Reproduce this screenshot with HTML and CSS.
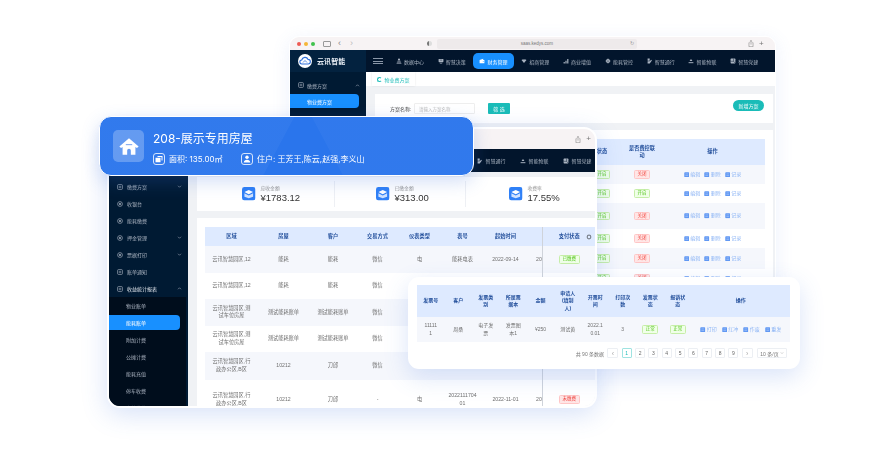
FILE: index.html
```html
<!DOCTYPE html>
<html lang="zh-CN">
<head>
<meta charset="utf-8">
<title>云讯智能</title>
<link rel="stylesheet" href="styles.css">
</head>
<body>
<svg class="defs" aria-hidden="true">
  <symbol id="i-square" viewBox="0 0 10 10"><rect x="1" y="1" width="8" height="8" rx="1.500" fill="none" stroke="currentColor" stroke-width="1.100"/><path d="M3 4h4M3 6h4" stroke="currentColor" stroke-width=".9"/></symbol>
  <symbol id="i-circle" viewBox="0 0 10 10"><circle cx="5" cy="5" r="4" fill="none" stroke="currentColor" stroke-width="1.100"/><circle cx="5" cy="5" r="1.600" fill="currentColor"/></symbol>
  <symbol id="n1" viewBox="0 0 10 10"><circle cx="5" cy="2.500" r="1.800" fill="currentColor"/><path d="M2.500 5.200h5M1.500 7h7M1 9h8" stroke="currentColor" stroke-width="1.100"/></symbol>
  <symbol id="n2" viewBox="0 0 10 10"><rect x="1" y="1.500" width="8" height="5.500" rx="1" fill="currentColor"/><path d="M3 3.500h4" stroke="#02152c" stroke-width=".8"/><path d="M3 8.800h4" stroke="currentColor" stroke-width="1.100"/></symbol>
  <symbol id="n3" viewBox="0 0 10 10"><path d="M1 3.500L7 1.200v2.300h2v5.300H1z" fill="currentColor"/><circle cx="7" cy="6" r=".8" fill="#1890ff"/></symbol>
  <symbol id="n4" viewBox="0 0 10 10"><path d="M.8 3.500L3.500 2 5 3l1.500-1 2.700 1.500L5 8.300z" fill="currentColor"/></symbol>
  <symbol id="n5" viewBox="0 0 10 10"><path d="M1 9V6.500h2V9zM4 9V4.500h2V9zM7 9V1.500h2V9z" fill="currentColor"/></symbol>
  <symbol id="n6" viewBox="0 0 10 10"><circle cx="5" cy="5" r="3.400" fill="currentColor"/><path d="M5 .6v8.800M.6 5h8.800" stroke="currentColor" stroke-width=".9"/><circle cx="5" cy="5" r="1" fill="#02152c"/></symbol>
  <symbol id="n7" viewBox="0 0 10 10"><path d="M1 1h3.500v3.500H1zM1 9V5.500h3.500L7 3l1.200 1.200L4.500 9z" fill="currentColor"/></symbol>
  <symbol id="n8" viewBox="0 0 10 10"><path d="M5 1.500l2.400 3.700H2.600z" fill="currentColor"/><path d="M1 7.800h8" stroke="currentColor" stroke-width="1.600"/></symbol>
  <symbol id="n9" viewBox="0 0 10 10"><rect x="1" y="1" width="8" height="8" rx="1" fill="currentColor"/><path d="M1 5.500h5V1M6 5.500L9 9" stroke="#02152c" stroke-width=".8" fill="none"/></symbol>
  <symbol id="i-down" viewBox="0 0 10 10"><path d="M2 3.500l3 3 3-3" fill="none" stroke="currentColor" stroke-width="1.400"/></symbol>
  <symbol id="i-up" viewBox="0 0 10 10"><path d="M2 6.500l3-3 3 3" fill="none" stroke="currentColor" stroke-width="1.400"/></symbol>
  <symbol id="i-op" viewBox="0 0 10 10"><rect x=".5" y=".5" width="9" height="9" rx="1.500" fill="currentColor"/><path d="M2.500 3.500h5M2.500 6.500h5" stroke="#fff" stroke-width=".8" opacity=".7"/></symbol>
  <symbol id="i-share" viewBox="0 0 10 12"><path d="M2.500 4.500H1.500v7h7v-7H7.500M5 8V.8M3 2.700L5 .8l2 1.900" fill="none" stroke="currentColor" stroke-width=".9"/></symbol>
  <symbol id="i-box" viewBox="0 0 14 14"><rect width="14" height="14" rx="2.500" fill="#2f80f7"/><path d="M2.500 5.300L7 3l4.500 2.300L7 7.600z" fill="#fff"/><path d="M2.500 6.600L7 8.900l4.500-2.300v3.600L7 11.600l-4.500-1.400z" fill="#cfe2ff"/></symbol>
</svg>

<section class="win win-a">
  <div class="chrome">
    <span class="dot dot-r"></span><span class="dot dot-y"></span><span class="dot dot-g"></span>
    <span class="tb-side"></span>
    <span class="tb-arrow">‹</span><span class="tb-arrow tb-dim">›</span>
    <span class="tb-shield"></span>
    <div class="urlbar"><span class="url">saas.kedys.com</span><span class="reload">↻</span></div>
    <svg class="share"><use href="#i-share"/></svg>
    <span class="tb-plus">+</span>
  </div>
  <div class="navbar">
    <div class="brand">
      <svg class="logo" viewBox="0 0 14 14"><circle cx="7" cy="7" r="7" fill="#fff"/><path d="M4 10a2 2 0 0 1-.3-4 3.400 3.400 0 0 1 6.400-.6A2.300 2.300 0 0 1 10 10z" fill="none" stroke="#2f6fd8" stroke-width="1.100"/><path d="M5 8.500l2-2 2 2" fill="none" stroke="#2f6fd8" stroke-width=".8"/></svg>
      <span class="brand-name">云讯智能</span>
    </div>
    <div class="burger"><i></i><i></i><i></i></div>
    <nav class="topnav">
      <a class="nav-item"><svg class="ico"><use href="#n1"/></svg>数据中心</a>
      <a class="nav-item"><svg class="ico"><use href="#n2"/></svg>智慧决策</a>
      <a class="nav-item nav-on"><svg class="ico"><use href="#n3"/></svg>财务管理</a>
      <a class="nav-item"><svg class="ico"><use href="#n4"/></svg>招商管理</a>
      <a class="nav-item"><svg class="ico"><use href="#n5"/></svg>商业增值</a>
      <a class="nav-item"><svg class="ico"><use href="#n6"/></svg>能耗管控</a>
      <a class="nav-item"><svg class="ico"><use href="#n7"/></svg>智慧通行</a>
      <a class="nav-item"><svg class="ico"><use href="#n8"/></svg>智能物联</a>
      <a class="nav-item"><svg class="ico"><use href="#n9"/></svg>智慧党建</a>
    </nav>
  </div>
  <div class="body">
    <aside class="side side-a">
      <div class="side-row"><svg class="ico"><use href="#i-square"/></svg><span>缴费方案</span><svg class="chev"><use href="#i-up"/></svg></div>
      <div class="side-row side-on side-on-a"><span>物业费方案</span></div>
    </aside>
    <main class="main-a">
      <div class="tabbar"><div class="tab"><span class="tab-spin"></span>物业费方案</div></div>
      <div class="panel filter">
        <label class="f-label">方案名称:</label>
        <span class="f-input">请输入方案名称</span>
        <span class="btn-teal">筛 选</span>
        <span class="btn-pill">新增方案</span>
      </div>
      <div class="panel table-a-wrap">
        <table class="tbl tbl-a">
          <thead><tr class="ah"><th class="a0"></th><th class="a1">状态</th><th class="a2">是否费控联<br>动</th><th class="a3">操作</th></tr></thead>
          <tbody>
            <tr class="ar19 alt"><td></td><td><span class="tag tag-g">开启</span></td><td><span class="tag tag-r">关闭</span></td><td><span class="ops"><span><svg class="op"><use href="#i-op"/></svg>编辑</span><span><svg class="op"><use href="#i-op"/></svg>删除</span><span><svg class="op"><use href="#i-op"/></svg>记录</span></span></td></tr>
            <tr class="ar19"><td></td><td><span class="tag tag-g">开启</span></td><td><span class="tag tag-g">开启</span></td><td><span class="ops"><span><svg class="op"><use href="#i-op"/></svg>编辑</span><span><svg class="op"><use href="#i-op"/></svg>删除</span><span><svg class="op"><use href="#i-op"/></svg>记录</span></span></td></tr>
            <tr class="ar26 alt"><td></td><td><span class="tag tag-g">开启</span></td><td><span class="tag tag-r">关闭</span></td><td><span class="ops"><span><svg class="op"><use href="#i-op"/></svg>编辑</span><span><svg class="op"><use href="#i-op"/></svg>删除</span><span><svg class="op"><use href="#i-op"/></svg>记录</span></span></td></tr>
            <tr class="ar19"><td></td><td><span class="tag tag-g">开启</span></td><td><span class="tag tag-r">关闭</span></td><td><span class="ops"><span><svg class="op"><use href="#i-op"/></svg>编辑</span><span><svg class="op"><use href="#i-op"/></svg>删除</span><span><svg class="op"><use href="#i-op"/></svg>记录</span></span></td></tr>
            <tr class="ar21 alt"><td></td><td><span class="tag tag-g">开启</span></td><td><span class="tag tag-r">关闭</span></td><td><span class="ops"><span><svg class="op"><use href="#i-op"/></svg>编辑</span><span><svg class="op"><use href="#i-op"/></svg>删除</span><span><svg class="op"><use href="#i-op"/></svg>记录</span></span></td></tr>
            <tr class="ar19"><td></td><td><span class="tag tag-g">开启</span></td><td><span class="tag tag-r">关闭</span></td><td><span class="ops"><span><svg class="op"><use href="#i-op"/></svg>编辑</span><span><svg class="op"><use href="#i-op"/></svg>删除</span><span><svg class="op"><use href="#i-op"/></svg>记录</span></span></td></tr>
          </tbody>
        </table>
      </div>
    </main>
  </div>
</section>

<section class="win win-b">
  <div class="chrome chrome-b"><svg class="share"><use href="#i-share"/></svg><span class="tb-plus">+</span></div>
  <div class="navbar navbar-b">
    <nav class="topnav topnav-b">
      <a class="nav-item"><svg class="ico"><use href="#n7"/></svg>智慧通行</a>
      <a class="nav-item"><svg class="ico"><use href="#n8"/></svg>智能物联</a>
      <a class="nav-item"><svg class="ico"><use href="#n9"/></svg>智慧党建</a>
    </nav>
  </div>
  <div class="body body-b">
    <aside class="side side-b">
      <div class="side-row"><svg class="ico"><use href="#i-square"/></svg><span>缴费方案</span><svg class="chev"><use href="#i-down"/></svg></div>
      <div class="side-row"><svg class="ico"><use href="#i-circle"/></svg><span>收银台</span></div>
      <div class="side-row"><svg class="ico"><use href="#i-circle"/></svg><span>能耗缴费</span></div>
      <div class="side-row"><svg class="ico"><use href="#i-circle"/></svg><span>押金管理</span><svg class="chev"><use href="#i-down"/></svg></div>
      <div class="side-row"><svg class="ico"><use href="#i-circle"/></svg><span>票据打印</span><svg class="chev"><use href="#i-down"/></svg></div>
      <div class="side-row"><svg class="ico"><use href="#i-square"/></svg><span>账单通知</span></div>
      <div class="side-row side-open"><svg class="ico"><use href="#i-square"/></svg><span>收益统计报表</span><svg class="chev"><use href="#i-up"/></svg></div>
      <div class="submenu">
        <div class="side-row"><span>物业账单</span></div>
        <div class="side-row side-on"><span>能耗账单</span></div>
        <div class="side-row"><span>附加计费</span></div>
        <div class="side-row"><span>公摊计费</span></div>
        <div class="side-row"><span>能耗充值</span></div>
        <div class="side-row"><span>停车收费</span></div>
        <div class="side-row"><span>充值缴费</span></div>
      </div>
    </aside>
    <main class="main-b">
      <div class="panel stats">
        <div class="stat"><svg class="stat-ico"><use href="#i-box"/></svg><div><div class="stat-label">应收金额</div><div class="stat-val">¥1783.12</div></div></div>
        <div class="stat"><svg class="stat-ico"><use href="#i-box"/></svg><div><div class="stat-label">已缴金额</div><div class="stat-val">¥313.00</div></div></div>
        <div class="stat"><svg class="stat-ico"><use href="#i-box"/></svg><div><div class="stat-label">收费率</div><div class="stat-val">17.55%</div></div></div>
      </div>
      <div class="panel table-b-wrap">
        <table class="tbl tbl-b">
          <thead><tr class="bh"><th class="b1">区域</th><th class="b2">房屋</th><th class="b3">客户</th><th class="b4">交易方式</th><th class="b5">仪表类型</th><th class="b6">表号</th><th class="b7">起始时间</th><th class="b8"></th><th class="b9">支付状态<svg class="gear" viewBox="0 0 10 10"><circle cx="5" cy="5" r="3" fill="none" stroke="#7d8590" stroke-width="2"/></svg></th></tr></thead>
          <tbody>
            <tr class="br alt"><td>云讯智慧园区,12</td><td>能耗</td><td>能耗</td><td>微信</td><td>电</td><td>能耗电表</td><td>2022-09-14</td><td class="cut">20</td><td class="fix"><span class="tag tag-g">已缴费</span></td></tr>
            <tr class="br"><td>云讯智慧园区,12</td><td>能耗</td><td>能耗</td><td>微信</td><td></td><td></td><td></td><td class="cut"></td><td class="fix"></td></tr>
            <tr class="br alt"><td>云讯智慧园区,测<br>试车位房屋</td><td>测试能耗账单</td><td>测试能耗账单</td><td>微信</td><td></td><td></td><td></td><td class="cut"></td><td class="fix"></td></tr>
            <tr class="br"><td>云讯智慧园区,测<br>试车位房屋</td><td>测试能耗账单</td><td>测试能耗账单</td><td>微信</td><td></td><td></td><td></td><td class="cut"></td><td class="fix"></td></tr>
            <tr class="br br28 alt"><td>云讯智慧园区,行<br>政办公区,B区</td><td>10212</td><td>刀郎</td><td>微信</td><td></td><td></td><td></td><td class="cut"></td><td class="fix"></td></tr>
            <tr class="br-last"><td>云讯智慧园区,行<br>政办公区,B区</td><td>10212</td><td>刀郎</td><td>-</td><td>电</td><td>2022111704<br>01</td><td>2022-11-01</td><td class="cut">20</td><td class="fix"><span class="tag tag-r">未缴费</span></td></tr>
          </tbody>
        </table>
      </div>
    </main>
  </div>
</section>

<section class="house-card">
  <div class="house-ico"><svg viewBox="0 0 24 24"><path d="M12 3.500L1.500 12.500l1.800 1.800L5 13v8.500h5V17a2 2 0 0 1 4 0v4.500h5V13l1.700 1.300 1.800-1.800z" fill="#fff"/><path d="M8.500 10.500h7" stroke="#7fa9f2" stroke-width="1.200"/></svg></div>
  <div class="house-text">
    <h1 class="house-title">208-展示专用房屋</h1>
    <div class="house-meta">
      <span class="meta meta-1"><svg class="meta-ico" viewBox="0 0 12 12"><rect x=".5" y=".5" width="11" height="11" rx="2.500" fill="none" stroke="#fff" stroke-width=".8"/><path d="M4.500 3h5v4.500h-1V4h-4zM2.500 4.800h5v4.500h-5z" fill="#fff"/></svg>面积: 135.00㎡</span>
      <span class="meta"><svg class="meta-ico" viewBox="0 0 12 12"><rect x=".5" y=".5" width="11" height="11" rx="2.500" fill="none" stroke="#fff" stroke-width=".8"/><circle cx="6" cy="4.300" r="1.700" fill="#fff"/><path d="M2.700 9.500c.3-2 1.500-2.800 3.300-2.800s3 .8 3.300 2.800z" fill="#fff"/></svg>住户: 王芳王,陈云,赵强,李义山</span>
    </div>
  </div>
</section>

<section class="win win-c">
  <table class="tbl tbl-c">
    <thead><tr class="ch"><th class="c1">发票号</th><th class="c1">客户</th><th class="c1">发票类<br>别</th><th class="c1">所属票<br>据本</th><th class="c2">金额</th><th class="c1">申请人<br>(填制<br>人)</th><th class="c1">开票时<br>间</th><th class="c1">打印次<br>数</th><th class="c1">发票状<br>态</th><th class="c1">报销状<br>态</th><th class="c3">操作</th></tr></thead>
    <tbody>
      <tr class="cr alt"><td>11111<br>1</td><td>周桑</td><td>电子发<br>票</td><td>发票图<br>本1</td><td>¥250</td><td>测试黄</td><td>2022.1<br>0.01</td><td>3</td><td><span class="tag tag-g">正常</span></td><td><span class="tag tag-g">正常</span></td><td><span class="ops ops-c"><span><svg class="op"><use href="#i-op"/></svg>打印</span><span><svg class="op"><use href="#i-op"/></svg>红冲</span><span><svg class="op"><use href="#i-op"/></svg>作废</span><span><svg class="op"><use href="#i-op"/></svg>重发</span></span></td></tr>
    </tbody>
  </table>
  <div class="pager">
    <span class="total">共 90 条数据</span>
    <span class="pg pg-nav">‹</span>
    <span class="pg pg-on">1</span><span class="pg">2</span><span class="pg">3</span><span class="pg">4</span><span class="pg">5</span><span class="pg">6</span><span class="pg">7</span><span class="pg">8</span><span class="pg">9</span>
    <span class="pg pg-nav">›</span>
    <span class="pg-size">10 条/页<svg class="chev-s"><use href="#i-down"/></svg></span>
  </div>
</section>
</body>
</html>
```

FILE: styles.css
```css
* { box-sizing: border-box; }
html, body { margin: 0; padding: 0; }
body {
  position: relative;
  width: 880px;
  height: 460px;
  overflow: hidden;
  background: #fff;
  font-family: "Liberation Sans", "Noto Sans CJK SC", sans-serif;
  color: #666;
}
.defs { position: absolute; width: 0; height: 0; }

/* desktop windows */
.win {
  position: absolute;
  background: #fff;
  overflow: hidden;
  filter: blur(.3px);
}
.win-a {
  left: 289px; top: 36px; width: 487px; height: 254px;
  border: 1px solid #fff;
  border-radius: 10px;
  box-shadow: 0 4px 18px rgba(96, 140, 230, .12);
  z-index: 1;
}
.win-b {
  left: 107px; top: 127px; width: 490px; height: 281px;
  border: 2px solid #fff;
  border-radius: 13px;
  box-shadow: 0 6px 26px rgba(70, 120, 225, .22);
  z-index: 2;
}
.win-c {
  left: 408px; top: 277px; width: 392px; height: 92px;
  padding: 8px 10px 0 9px;
  border-radius: 11px;
  box-shadow: 0 8px 24px rgba(70, 120, 225, .2);
  z-index: 4;
}

/* browser chrome */
.chrome {
  height: 13px;
  padding-left: 7px;
  display: flex;
  align-items: center;
  background: #f7f3f4;
  color: #777;
}
.dot { width: 4px; height: 4px; border-radius: 50%; margin-right: 3px; }
.dot-r { background: #ee5a52; }
.dot-y { background: #f5b636; }
.dot-g { background: #3fc24c; }
.tb-side { width: 8px; height: 6px; margin-left: 5px; border: 1px solid #999; border-radius: 1px; }
.tb-arrow { margin-left: 7px; width: 5px; font-size: 9px; line-height: 9px; color: #888; }
.tb-dim { color: #bbb; }
.tb-shield { width: 5px; height: 5px; margin-left: 72px; border-radius: 50%; background: linear-gradient(90deg, #777 50%, #ddd 50%); }
.urlbar {
  width: 200px; height: 10px; margin-left: 5px;
  display: flex; align-items: center; justify-content: center;
  position: relative;
  border-radius: 2px;
  background: #eeeaeb;
}
.url { font-size: 4.500px; color: #777; }
.reload { position: absolute; right: 3px; top: 1px; font-size: 5px; line-height: 7px; color: #999; }
.share { width: 6px; height: 7px; margin-left: 111px; color: #777; }
.tb-plus { margin-left: 5px; font-size: 8px; line-height: 8px; color: #777; }

/* top bar */
.navbar { height: 22px; display: flex; align-items: center; background: #02152c; }
.brand {
  width: 76px; height: 100%;
  padding-left: 8px;
  display: flex; align-items: center; gap: 5px;
  background: #03223f;
}
.logo { width: 14px; height: 14px; flex: none; }
.brand-name { font-size: 7px; font-weight: 700; color: #e8eef5; letter-spacing: .1px; }
.burger { width: 10px; margin: 0 6px 0 7px; display: flex; flex-direction: column; gap: 1.500px; }
.burger i { height: 1px; background: #8b97a8; }
.topnav { display: grid; grid-template-columns: repeat(9, 41.800px); height: 100%; }
.nav-item {
  display: flex; align-items: center; justify-content: center; gap: 2px;
  margin: 3px 0;
  font-size: 5px; color: #a9b3c0;
  white-space: nowrap;
}
.nav-on { background: #1890ff; color: #fff; border-radius: 5px; }
.ico { width: 6px; height: 6px; flex: none; color: #a9b3c0; }
.nav-on .ico { color: #fff; }

.body { display: flex; height: 220px; }

/* sidebars */
.side { flex: none; background: #001a33; }
.side-a { width: 76px; padding-top: 6px; }
.side-row {
  height: 17px;
  padding-left: 8px;
  display: flex; align-items: center; gap: 3px;
  font-size: 5px; color: #a9b3c0;
  white-space: nowrap;
}
.side-a .side-row { height: 14px; }
.chev { width: 5px; height: 5px; margin-left: auto; margin-right: 6px; color: #8b97a8; }
.side-on { background: #1890ff; color: #fff; border-radius: 0 4px 4px 0; }
.side-on-a { width: 69px; padding-left: 17px; margin-top: 2px; }

/* window A main */
.main-a { flex: 1; background: #f0f2f5; }
.tabbar { height: 14px; background: #fff; padding-left: 6px; }
.tab {
  width: 43px; height: 14px;
  display: flex; align-items: center; gap: 2.500px;
  padding-left: 5px;
  font-size: 5px; color: #1abcb8;
  box-shadow: 0 0 2px rgba(0,0,0,.1);
}
.tab-spin { width: 5px; height: 5px; border: 1px solid #1abcb8; border-right-color: transparent; border-radius: 50%; }
.panel { background: #fff; }
.filter {
  width: 398px; height: 29px;
  margin: 8px 0 0 9px;
  padding-left: 15px;
  display: flex; align-items: center;
}
.f-label { font-size: 5px; color: #444; width: 24px; }
.f-input {
  width: 61px; height: 11px;
  padding-left: 4px;
  display: flex; align-items: center;
  font-size: 4.500px; color: #bbb;
  border: 1px solid #eee;
  border-radius: 1px;
}
.btn-teal {
  width: 22px; height: 11px; margin-left: 13px;
  display: flex; align-items: center; justify-content: center;
  font-size: 5px; color: #fff; background: #1abcb8; border-radius: 1px;
}
.btn-pill {
  width: 31px; height: 11px; margin-left: auto; margin-right: 9px; margin-top: -6px;
  display: flex; align-items: center; justify-content: center;
  font-size: 5px; color: #fff; background: #1abcb8; border-radius: 6px;
}
.table-a-wrap { width: 398px; height: 170px; margin: 7px 0 0 9px; padding: 9px 0 0 8px; overflow: hidden; }

/* tables */
.tbl { border-collapse: collapse; table-layout: fixed; font-size: 5.200px; line-height: 7.400px; text-align: center; color: #707070; }
.tbl th { padding: 0; font-weight: 700; color: #24509c; background: #deeaff; }
.tbl td { padding: 0; }
.alt td { background: #f5f7fc; }
.tag {
  display: inline-block;
  padding: 0 2.500px;
  font-size: 4.500px; line-height: 6.500px;
  border: 1px solid; border-radius: 1.500px;
}
.tag-g { color: #52c41a; background: #f0ffe8; border-color: #c6eea8; }
.tag-r { color: #f0443e; background: #ffe6e6; border-color: #ffc6c6; }

.tbl-a { width: 382px; }
.a0 { width: 197px; }
.a1 { width: 44px; }
.a2 { width: 36px; }
.a3 { width: 105px; }
.ah { height: 26px; }
.ar19 { height: 19px; }
.ar21 { height: 21px; }
.ar26 { height: 26px; }
.ops { display: flex; justify-content: center; gap: 4px; font-size: 5px; color: #8fb6f5; }
.ops > span { display: flex; align-items: center; gap: 1px; }
.op { width: 5.500px; height: 5.500px; color: #5f97f3; }

/* window B */
.chrome-b { justify-content: flex-end; padding-right: 4px; height: 20px; }
.chrome-b .share { margin-left: 0; }
.navbar-b { height: 23px; justify-content: flex-end; }
.topnav-b { grid-template-columns: repeat(3, 43px); margin-right: -4px; }
.body-b { height: 236px; }
.side-b { width: 79px; padding-top: 6px; background: #001a33; }
.side-b .ico { margin-right: 1px; }
.side-open { color: #dfe5ec; }
.submenu { background: #000d1c; height: 130px; margin-right: 2px; }
.submenu .side-row { padding-left: 17px; }
.submenu .side-on { width: 71px; height: 15px; margin: 1px 0; }
.main-b { flex: 1; padding: 5px 0 0 9px; background: #f0f2f5; }
.stats { height: 34px; display: grid; grid-template-columns: 138px 131px 129px; align-items: center; }
.stat { height: 26px; display: flex; align-items: center; gap: 5px; border-right: 1px solid #eef0f4; }
.stat:nth-child(1) { padding-left: 45px; }
.stat:nth-child(2) { padding-left: 41px; }
.stat:nth-child(3) { padding-left: 43px; border-right: 0; }
.stat-ico { width: 13.500px; height: 13.500px; }
.stat-label { font-size: 4.800px; line-height: 6px; color: #999; }
.stat-val { font-size: 9.500px; line-height: 11px; color: #333; }
.table-b-wrap { height: 188px; margin-top: 7px; padding: 9px 0 0 8px; overflow: hidden; }
.tbl-b { width: 391px; }
.b1 { width: 53px; } .b2 { width: 51px; } .b3 { width: 48px; } .b4 { width: 41px; }
.b5 { width: 43px; } .b6 { width: 43px; } .b7 { width: 43px; } .b8 { width: 15px; }
.b9 { width: 54px; position: relative; border-left: 1px solid #cfd3da; }
.bh { height: 19px; }
.br { height: 26.500px; }
.br28 { height: 27.500px; }
.br-last { height: 40px; }
.tbl .cut { padding-left: 9px; text-align: left; white-space: nowrap; }
.fix { border-left: 1px solid #cfd3da; }
.gear { position: absolute; right: 4px; top: 6.500px; width: 6px; height: 6px; }

/* floating card */
.house-card {
  position: absolute;
  left: 99px; top: 116px; width: 375px; height: 60px;
  z-index: 3;
  padding: 0 13px;
  display: flex; align-items: center; gap: 9px;
  border: 1px solid #fff;
  border-radius: 12px;
  background:
    linear-gradient(118deg, rgba(255,255,255,.035) 48%, transparent 48.200%),
    linear-gradient(62deg, transparent 60%, rgba(255,255,255,.03) 60.200%),
    #2a75ec;
  box-shadow: 0 6px 18px rgba(60, 110, 220, .22);
  color: #fff;
  font-family: "Inter", "Noto Sans CJK SC", sans-serif;
}
.house-ico {
  width: 31px; height: 32px;
  display: flex; align-items: center; justify-content: center;
  border-radius: 5px;
  background: rgba(255,255,255,.25);
}
.house-ico svg { width: 22px; height: 22px; }
.house-text { padding-top: 4px; }
.house-title { margin: 0 0 7px; font-size: 12px; line-height: 15px; font-weight: 400; }
.house-meta { display: flex; font-size: 8px; line-height: 12px; }
.meta { display: flex; align-items: center; gap: 4px; white-space: nowrap; }
.meta-1 { width: 88px; }
.meta-ico { width: 12px; height: 12px; flex: none; }

/* window C */
.tbl-c { width: 373px; font-size: 5px; }
.c1 { width: 27.500px; }
.c2 { width: 27px; }
.c3 { width: 98.500px; }
.ch { height: 32px; }
.cr { height: 25px; }
.ops-c { gap: 5px; }
.pager { height: 10px; margin-top: 6px; display: flex; align-items: center; justify-content: flex-end; gap: 3.330px; }
.total { font-size: 5px; color: #777; margin-right: 0; }
.pg {
  width: 10px; height: 10px;
  display: flex; align-items: center; justify-content: center;
  font-size: 5px; color: #666;
  border: 1px solid #eceff3; border-radius: 1px;
  background: #fff;
}
.pg-nav { width: 11px; color: #aaa; font-size: 7px; }
.pg-on { color: #1abcb8; border-color: #9fe3e1; }
.pg-size {
  width: 30px; height: 10px; margin-left: 1px; margin-right: 3px;
  display: flex; align-items: center; justify-content: center; gap: 1px;
  font-size: 5px; color: #777;
  border: 1px solid #eceff3; border-radius: 1px;
}
.chev-s { width: 4px; height: 4px; color: #aaa; }
```
